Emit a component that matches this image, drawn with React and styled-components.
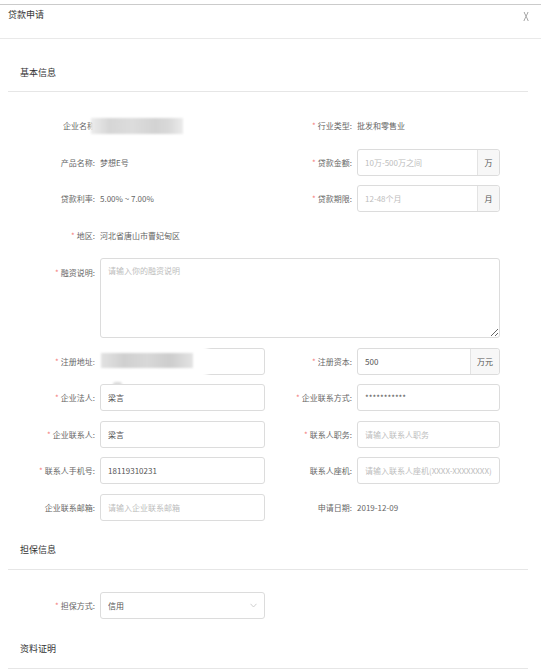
import React from "react"
import styled, { createGlobalStyle } from "styled-components"

const Global = createGlobalStyle`
  body {
    margin: 0;
    background: #fff;
    font-family: "Noto Sans CJK SC", "Noto Sans", sans-serif;
  }
  input, textarea {
    font-family: "Noto Sans CJK SC", "Noto Sans", sans-serif;
  }
  input::placeholder, textarea::placeholder {
    color: #bdbdbd;
  }
`

const Page = styled.div`
  width: 541px;
  padding-top: 4px;
`

const Header = styled.div`
  height: 29px;
  border-top: 1px solid #cbcbcb;
  border-bottom: 1px solid #e9e9e9;
  display: flex;
  justify-content: space-between;
  align-items: flex-start;
  padding: 4px 11px 0 8px;
`

const Title = styled.div`
  font-size: 9px;
  line-height: 12px;
  color: #333;
`

const Close = styled.div`
  font-family: "Liberation Sans", sans-serif;
  font-size: 12px;
  line-height: 14px;
  color: #999;
  margin-top: 1px;
  transform: scaleX(0.7);
`

const Section = styled.div`
  margin: ${p => p.$mt}px 13px 0 8px;
  padding: 0 12px ${p => p.$pb}px;
  border-bottom: 1px solid #e6e6e6;
  font-size: 9px;
  line-height: 12px;
  color: #333;
`

const Grid = styled.div`
  display: grid;
  grid-template-columns: 100px 165px 92px 143px;
  row-gap: 9.5px;
  align-items: center;
  padding-top: ${p => p.$top}px;
`

const Label = styled.div`
  text-align: right;
  padding-right: 5px;
  font-size: 8px;
  line-height: 27px;
  color: #666;
  white-space: nowrap;
  align-self: ${p => (p.$top ? "start" : "center")};
  padding-top: ${p => (p.$top ? 1 : 0)}px;
  &::before {
    content: ${p => (p.$req ? '"*"' : '""')};
    color: #f47b7b;
    margin-right: 2px;
  }
`

const Value = styled.div`
  font-size: 8px;
  line-height: 27px;
  color: #666;
  white-space: nowrap;
`

const Redacted = styled.div`
  width: 92px;
  height: 16px;
  margin-left: -9px;
  background: linear-gradient(90deg, #ececec 0%, #d6d6d6 20%, #dcdcdc 45%, #d3d3d3 70%, #d9d9d9 85%, #ececec 100%);
  filter: blur(0.8px);
`

const Box = styled.div`
  position: relative;
  height: 27px;
  box-sizing: border-box;
  border: 1px solid #dcdcdc;
  border-radius: 3px;
  display: flex;
  background: #fff;
`

const Field = styled.input`
  flex: 1;
  min-width: 0;
  border: none;
  outline: none;
  background: transparent;
  padding: 0 0 0 7px;
  font-size: 8px;
  color: #555;
`

const Addon = styled.div`
  width: ${p => p.$w}px;
  border-left: 1px solid #e3e3e3;
  background: #f7f7f7;
  font-size: 8px;
  color: #555;
  display: flex;
  align-items: center;
  justify-content: center;
  border-radius: 0 3px 3px 0;
`

const Area = styled.textarea`
  grid-column: 2 / 5;
  height: 80px;
  box-sizing: border-box;
  border: 1px solid #dcdcdc;
  border-radius: 3px;
  padding: 6px 7px;
  font-size: 8px;
  color: #555;
  resize: vertical;
  outline: none;
`

const Mask = styled.div`
  position: absolute;
  left: -5px;
  top: -7px;
  width: 112px;
  height: 38px;
  background: #fff;
  border-radius: 8px;
  filter: blur(2px);
`

const Smudge = styled.div`
  position: absolute;
  left: 0;
  top: 4px;
  width: 92px;
  height: 15px;
  background: linear-gradient(90deg, #e2e2e2 0%, #d0d0d0 25%, #d8d8d8 50%, #cdcdcd 75%, #e4e4e4 100%);
  filter: blur(0.8px);
`

const Speck = styled.div`
  position: absolute;
  left: 12px;
  top: 33px;
  width: 9px;
  height: 5px;
  border-radius: 3px;
  background: #dadada;
  filter: blur(1px);
`

const Chevron = styled.div`
  width: 22px;
  display: flex;
  align-items: center;
  justify-content: center;
`

const Input = ({ value, placeholder, addon, w }) => (
  <Box>
    <Field readOnly value={value || ""} placeholder={placeholder} />
    {addon && <Addon $w={w}>{addon}</Addon>}
  </Box>
)

const App = () => (
  <Page>
    <Global />
    <Header>
      <Title>贷款申请</Title>
      <Close>X</Close>
    </Header>

    <Section $mt={28} $pb={12}>基本信息</Section>
    <Grid $top={20}>
      <Label>企业名称</Label>
      <Redacted />
      <Label $req>行业类型:</Label>
      <Value>批发和零售业</Value>

      <Label>产品名称:</Label>
      <Value>梦想E号</Value>
      <Label $req>贷款金额:</Label>
      <Input placeholder="10万-500万之间" addon="万" w={21} />

      <Label>贷款利率:</Label>
      <Value>5.00% ~ 7.00%</Value>
      <Label $req>贷款期限:</Label>
      <Input placeholder="12-48个月" addon="月" w={21} />

      <Label $req>地区:</Label>
      <Value>河北省唐山市曹妃甸区</Value>
      <div />
      <div />

      <Label $req $top>融资说明:</Label>
      <Area readOnly placeholder="请输入你的融资说明" />

      <Label $req>注册地址:</Label>
      <Box>
        <Field readOnly value="" />
        <Mask />
        <Smudge />
        <Speck />
      </Box>
      <Label $req>注册资本:</Label>
      <Input value="500" addon="万元" w={28} />

      <Label $req>企业法人:</Label>
      <Input value="梁言" />
      <Label $req>企业联系方式:</Label>
      <Input value="***********" />

      <Label $req>企业联系人:</Label>
      <Input value="梁言" />
      <Label $req>联系人职务:</Label>
      <Input placeholder="请输入联系人职务" />

      <Label $req>联系人手机号:</Label>
      <Input value="18119310231" />
      <Label>联系人座机:</Label>
      <Input placeholder="请输入联系人座机(XXXX-XXXXXXXX)" />

      <Label>企业联系邮箱:</Label>
      <Input placeholder="请输入企业联系邮箱" />
      <Label>申请日期:</Label>
      <Value>2019-12-09</Value>
    </Grid>

    <Section $mt={23} $pb={13}>担保信息</Section>
    <Grid $top={22}>
      <Label $req>担保方式:</Label>
      <Box>
        <Field readOnly value="信用" />
        <Chevron>
          <svg width="7" height="5" viewBox="0 0 7 5">
            <path d="M0.5 0.8 L3.5 4 L6.5 0.8" fill="none" stroke="#c4c4c4" strokeWidth="0.8" />
          </svg>
        </Chevron>
      </Box>
    </Grid>

    <Section $mt={24} $pb={13}>资料证明</Section>
  </Page>
)

export default App
